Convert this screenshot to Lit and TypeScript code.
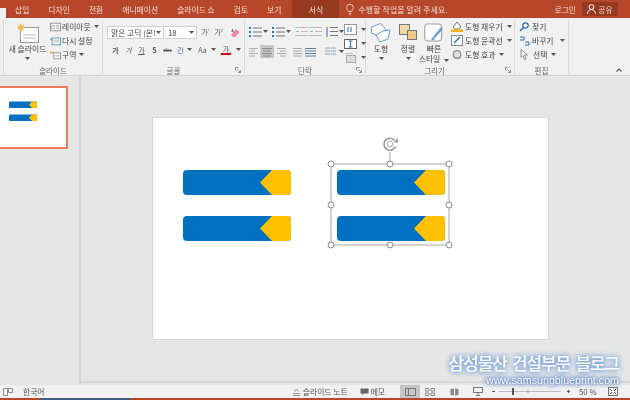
import { LitElement, html, svg, css } from "lit";
import { customElement } from "lit/decorators.js";

const caret = html`<svg class="caret" width="5" height="3" viewBox="0 0 5 3"><path d="M0 0h5L2.500 3z" fill="#555"/></svg>`;
const launcher = html`<svg class="launch" width="6" height="6" viewBox="0 0 6 6"><path d="M.5 .5h3M.5 .5v3M5.500 5.500L2.500 2.500M5.500 3v2.500H3" fill="none" stroke="#777" stroke-width=".8"/></svg>`;

const g = (w: number, h: number, body: unknown) => html`<svg class="ic" width=${w} height=${h} viewBox="0 0 ${w} ${h}" fill="none">${body}</svg>`;

function rows(w: number, spec: [number, number][], color = "#8a8a8a") {
  return g(w, 10, spec.map(([x, l], i) => svg`<rect x=${x} y=${1 + i * 2.500} width=${l} height="1" fill=${color}></rect>`));
}

const bullets = g(13, 11, svg`<g fill="#2b6cb0"><rect x="0" y="1" width="2" height="2"/><rect x="0" y="5" width="2" height="2"/><rect x="0" y="9" width="2" height="2"/></g><g fill="#777"><rect x="4" y="1.500" width="9" height="1"/><rect x="4" y="5.500" width="9" height="1"/><rect x="4" y="9.500" width="9" height="1"/></g>`);
const indent = g(13, 11, svg`<g fill="#bbb"><rect x="0" y="1" width="13" height="1"/><rect x="6" y="5" width="7" height="1"/><rect x="0" y="9" width="13" height="1"/></g><path d="M1 5.500h3" stroke="#8db4d8"/>`);
const spacing = g(13, 12, svg`<path d="M2 1v10" stroke="#2b6cb0"/><g fill="#777"><rect x="5" y="1" width="8" height="1"/><rect x="5" y="5" width="8" height="1"/><rect x="5" y="9" width="8" height="1"/></g>`);

@customElement("app-root")
export class AppRoot extends LitElement {
  static styles = css`
    :host { display: block; width: 630px; height: 400px; overflow: hidden; position: relative; background: #e6e6e6; color: #444;
      font: 7.800px "Noto Sans CJK KR", "Noto Sans", sans-serif; filter: blur(.35px); }
    * { box-sizing: border-box; }
    svg { display: block; flex: none; }
    .page { display: flex; flex-direction: column; height: 400px; }
    .tabs { height: 18px; flex: none; background: #b7472a; color: #f4dcd4; display: flex; align-items: center; position: relative; }
    .home { width: 6px; height: 10px; background: #f1f1f1; align-self: flex-end; }
    .tab-list { display: flex; gap: 19px; margin-left: 9px; }
    .active { width: 47px; height: 18px; margin-left: 11px; background: #963a20; display: flex; align-items: center; justify-content: center; color: #f6e2db; }
    .tell { display: flex; align-items: center; gap: 4px; margin-left: 7px; letter-spacing: .2px; }
    .right { margin-left: auto; display: flex; align-items: center; height: 18px; margin-right: 12px; }
    .login { margin-right: 6px; }
    .share { height: 14px; width: 36px; background: #963a20; display: flex; align-items: center; justify-content: center; gap: 2px; }
    .ribbon { height: 58px; flex: none; background: #f1f1f1; border-bottom: 1px solid #d2d2d2; display: flex; padding-left: 3px; position: relative; }
    .ribbon > .grp:first-child { border-left: 1px solid #dadada; }
    .grp { display: flex; flex-direction: column; border-right: 1px solid #dadada; height: 54px; margin-top: 2px; position: relative; flex: none; }
    .body { height: 44px; display: flex; }
    .label { flex: 1; display: flex; align-items: center; justify-content: center; color: #666; font-size: 7.500px; line-height: 1; padding-top: 3px; }
    .launch { position: absolute; right: 3px; bottom: 1px; }
    .big { display: flex; flex-direction: column; align-items: center; line-height: 10px; flex: none; }
    .big .caret { margin-top: 3px; }
    .col { display: flex; flex-direction: column; gap: 3.200px; }
    .item { display: flex; align-items: center; gap: 2px; height: 11px; white-space: nowrap; }
    .item .caret { margin-left: 2px; }
    .small-ic .ic { width: 11px; }
    .small-ic .item { gap: 1px; }
    .box { height: 13px; background: #fff; border: 1px solid #cfcfcf; display: flex; align-items: center; justify-content: space-between; padding: 0 2px 0 3px; white-space: nowrap; overflow: hidden; }
    .font-rows { display: flex; flex-direction: column; gap: 4px; padding: 6px 0 0 4px; }
    .row { display: flex; align-items: center; height: 13px; }
    .gl { width: 13px; text-align: center; font-size: 7px; color: #555; flex: none; }
    .para-rows { display: flex; flex-direction: column; gap: 7px; padding: 5px 0 0 4px; width: 99px; flex: none; }
    .para-far { display: flex; flex-direction: column; gap: 3px; padding-top: 4px; }
    .on { background: #c6c6c6; padding: 1.500px 1px; height: 13px; margin-left: -1px; }
    .main { flex: 1; display: flex; min-height: 0; padding-top: 0; }
    .side { width: 81px; flex: none; border-right: 2px solid #d6d6d6; padding-top: 10px; }
    .thumb { width: 68px; height: 63px; background: #fff; border: 2px solid #ee7b5c; border-left: 0; padding: 13px 0 0 9px; display: flex; flex-direction: column; gap: 5px; }
    .mini { width: 28px; height: 7.500px; }
    .stage { flex: 1; padding: 41px 0 0 71px; border-bottom: 2px solid #d6d6d6; margin-bottom: 2px; }
    .slide { width: 397px; height: 223px; background: #fff; border: 1px solid #d4d4d4; border-top-color: #ddd; position: relative; }
    .bar { position: absolute; width: 108px; height: 25px; }
    .sel { position: absolute; left: 170px; top: 15px; }
    .status { height: 13px; flex: none; background: #f1f1f1; display: flex; align-items: center; position: relative; padding-left: 3px; color: #555; }
    .lang { margin-left: 10px; }
    .st-right { margin-left: auto; display: flex; align-items: center; height: 13px; }
    .note { display: flex; align-items: center; gap: 2px; }
    .memo { display: flex; align-items: center; gap: 2px; margin-left: 12px; }
    .view { width: 20px; height: 13px; display: flex; align-items: center; justify-content: center; }
    .view.cur { background: #c6c6c6; margin-left: 15px; }
    .view.g { margin-left: 4px; }
    .zoomtxt { margin-left: 9px; width: 29px; }
    .strip { height: 2px; flex: none; background: #b7472a; padding-left: 40px; }
    .strip i { display: block; width: 90px; height: 2px; background: #3f5d85; }
    .wm { position: absolute; right: 11px; top: 354px; text-align: right; color: #fff; line-height: 1;
      text-shadow: 0 0 4px #5f8fd4, 0 0 7px #5f8fd4; }
    .wm1 { font-size: 17px; font-weight: 500; letter-spacing: -1.100px; word-spacing: 2.500px; }
    .wm2 { font: 500 10.700px/10px "Liberation Sans", sans-serif; margin-top: 4px; text-shadow: 0 0 2px #3d6fb8, 0 0 4px #3d6fb8, 0 0 6px #5f8fd4; }
  `;

  bar(style: string, cls = "bar") {
    return html`<svg class=${cls} style=${style} viewBox="0 0 108 25">
      <rect width="108" height="25" rx="4" fill="#0070c0"/>
      <path d="M89 0h15a4 4 0 0 1 4 4v17a4 4 0 0 1-4 4H89L77 12.500z" fill="#ffc000"/>
    </svg>`;
  }

  render() {
    return html`<div class="page">
      <div class="tabs">
        <div class="home"></div>
        <div class="tab-list">
          <span>삽입</span><span>디자인</span><span>전환</span><span>애니메이션</span><span>슬라이드 쇼</span><span>검토</span><span>보기</span>
        </div>
        <div class="active">서식</div>
        <div class="tell">
          <svg width="8" height="11" viewBox="0 0 8 11" fill="none" stroke="#f4dcd4" stroke-width=".9"><path d="M2.500 7.500C2 6 .6 5.500 .6 3.700a3.400 3.400 0 0 1 6.800 0C7.400 5.500 6 6 5.500 7.500zM2.800 9.200h2.400M3.200 10.500h1.600"/></svg>
          <span>수행할 작업을 알려 주세요.</span>
        </div>
        <div class="right">
          <span class="login">로그인</span>
          <div class="share">
            <svg width="9" height="10" viewBox="0 0 9 10" fill="none" stroke="#fff"><circle cx="4.500" cy="3" r="2.400"/><path d="M.5 9.500c.5-2.500 2-4 4-4s3.500 1.500 4 4"/></svg>
            <span>공유</span>
          </div>
        </div>
      </div>

      <div class="ribbon">
        <div class="grp" style="width:100px">
          <div class="body" style="padding:2px 0 0 3px">
            <div class="big" style="width:41px">
              ${g(22, 22, svg`<rect x="3.500" y="5.500" width="18" height="15" fill="#fff" stroke="#999"/><path d="M6 13h13M6 16h13" stroke="#bbb"/><path d="M4 1l1 2.500L7.500 2 6 4.500 8.500 5.500 6 6.500 7.500 9 5 7.500 4 10 3 7.500.5 9 2 6.500 0 5.500 2 4.500.5 2 3 3.500z" fill="#f0b849"/>`)}
              <span>새 슬라이드</span>${caret}
            </div>
            <div class="col small-ic" style="margin:-1px 0 0 2px">
              <div class="item">${g(13, 10, svg`<rect x=".5" y=".5" width="12" height="9" fill="#fff" stroke="#888"/><path d="M2 3h3v4H2zM7 3h4M7 5h4M7 7h4" stroke="#aaa"/>`)}<span>레이아웃</span>${caret}</div>
              <div class="item">${g(13, 10, svg`<rect x="2.500" y="1.500" width="10" height="8" fill="#fff" stroke="#4a8ec2"/><path d="M4 4h7M4 6h7" stroke="#aaa"/><path d="M0 3l2-2v4z" fill="#4a8ec2"/>`)}<span>다시 설정</span></div>
              <div class="item">${g(13, 10, svg`<rect x="4.500" y="2.500" width="8" height="7" fill="#fff" stroke="#888"/><path d="M5 6h7" stroke="#aaa"/><path d="M0 2h4" stroke="#e8a33a" stroke-width="2"/>`)}<span>구역</span>${caret}</div>
            </div>
          </div>
          <div class="label">슬라이드</div>
        </div>

        <div class="grp" style="width:142px">
          <div class="body font-rows">
            <div class="row">
              <div class="box" style="width:57px">맑은 고딕 (본!${caret}</div>
              <div class="box" style="width:32px;margin-left:1px;border-left:0">18 ${caret}</div>
              <span class="gl" style="margin-left:2px;width:13px">가<sup style="font-size:4px;color:#2b6cb0">^</sup></span>
              <span class="gl">가<sup style="font-size:4px;color:#2b6cb0">v</sup></span>
              <span style="margin-left:5px">${g(10, 10, svg`<path d="M1 7l5-6 3.500 3-4 5H3z" fill="#e88aa8"/><path d="M1 3h3M2.500 1v3" stroke="#777"/>`)}</span>
            </div>
            <div class="row" style="padding-left:2px">
              <span class="gl" style="font-weight:700">가</span>
              <span class="gl" style="font-style:italic">가</span>
              <span class="gl" style="text-decoration:underline">가</span>
              <span class="gl" style="font-weight:700">S</span>
              <span class="gl" style="font-size:5px;text-decoration:line-through">abc</span>
              <span class="gl" style="color:#2b6cb0">간</span>
              ${caret}
              <span class="gl" style="margin-left:2px;width:17px">Aa</span>${caret}
              <span class="gl" style="margin-left:5px;border-bottom:2px solid #e00000;line-height:8px;width:10px">가</span>
              <span style="margin-left:5px">${caret}</span>
            </div>
          </div>
          <div class="label">글꼴</div>${launcher}
        </div>

        <div class="grp" style="width:121px">
          <div class="body">
            <div class="para-rows">
              <div class="row" style="gap:1px">
                ${bullets}${caret}<span style="width:3px"></span>${bullets}${caret}<span style="width:3px"></span>${indent}${indent}<span style="width:1px"></span>${spacing}${caret}
              </div>
              <div class="row" style="gap:3px">
                ${rows(9, [[0, 9], [0, 6], [0, 9], [0, 6]], "#aaa")}
                <span class="on">${rows(12, [[1, 10], [2, 8], [1, 10], [2, 8]], "#888")}</span>
                ${rows(9, [[0, 9], [3, 6], [0, 9], [3, 6]], "#aaa")}
                <span style="width:1px"></span>
                ${rows(9, [[0, 9], [0, 9], [0, 9], [0, 9]], "#aaa")}
                ${rows(11, [[0, 11], [0, 11], [0, 11], [0, 11]], "#5a7d9a")}
                <span style="width:3px"></span>
                ${g(11, 9, svg`<path d="M0 1h5M6 1h5M0 4h5M6 4h5M0 7h5M6 7h5" stroke="#7fa3c4" stroke-width="1.200"/>`)}${caret}
              </div>
            </div>
            <div class="para-far">
              <div class="item">${g(13, 11, svg`<rect x=".5" y=".5" width="12" height="10" fill="#fff" stroke="#999"/><path d="M4 3v5M7 3v5" stroke="#2b6cb0"/>`)}${caret}</div>
              <div class="item">${g(13, 11, svg`<rect x=".5" y="1.500" width="12" height="9" fill="#fff" stroke="#666"/><path d="M6.500 3v6M4.500 3h4M4.500 9h4" stroke="#2b6cb0"/>`)}${caret}</div>
              <div class="item">${g(13, 11, svg`<rect x="2.500" y="3.500" width="9" height="7" fill="#ddd" stroke="#aaa"/><path d="M1 1.500h8" stroke="#bbb"/>`)}${caret}</div>
            </div>
          </div>
          <div class="label">단락</div>${launcher}
        </div>

        <div class="grp" style="width:149px">
          <div class="body" style="padding:2px 0 0 5px">
            <div class="big" style="width:20px">
              ${g(20, 22, svg`<path d="M.5 5L10 1.500 15 8 8 14 .5 11z" fill="#fff" stroke="#6a9cc4"/><path d="M12 9l7-1-2 9-8 3-4-7z" fill="#fff" stroke="#6a9cc4"/>`)}
              <span>도형</span>${caret}
            </div>
            <div class="big" style="width:20px;margin-left:7px">
              ${g(20, 22, svg`<rect x="1.500" y="2.500" width="10" height="10" fill="#f0d9a8" stroke="#777"/><rect x="9.500" y="8.500" width="9" height="9" fill="#f3c98a" stroke="#777"/>`)}
              <span>정렬</span>${caret}
            </div>
            <div class="big" style="width:28px;margin-left:2px">
              ${g(20, 22, svg`<rect x=".7" y="2" width="17" height="17" rx="3" fill="#fff" stroke="#999"/><path d="M9 15l8-10 2 2-8 9z" fill="#6a9cc4"/><path d="M7 18l2-3 2 1-1 2z" fill="#6a9cc4"/>`)}
              <span>빠른</span>
              <span class="item" style="height:10px">스타일${caret}</span>
            </div>
            <div class="col" style="margin:-1px 0 0 3px">
              <div class="item">${g(12, 11, svg`<path d="M2 6l4-5 4 5-3 2H4z" fill="#fff" stroke="#777"/><rect x="0" y="8.500" width="12" height="2.500" fill="#f0b400"/>`)}<span>도형 채우기</span>${caret}</div>
              <div class="item">${g(12, 11, svg`<rect x=".5" y=".5" width="11" height="10" fill="#fff" stroke="#888"/><path d="M3 8l6-6" stroke="#2b6cb0" stroke-width="1.500"/>`)}<span>도형 윤곽선</span>${caret}</div>
              <div class="item">${g(12, 11, svg`<circle cx="6" cy="5.500" r="4" fill="#ddd" stroke="#777"/><path d="M3 9h7" stroke="#999"/>`)}<span>도형 효과</span>${caret}</div>
            </div>
          </div>
          <div class="label" style="padding-right:11px">그리기</div>${launcher}
        </div>

        <div class="grp" style="width:54px">
          <div class="body" style="padding:1px 0 0 4px">
            <div class="col">
              <div class="item">${g(10, 10, svg`<circle cx="6.500" cy="3.500" r="2.700" stroke="#2b6cb0" stroke-width="1.200"/><path d="M4.500 5.500L1 9" stroke="#2b6cb0" stroke-width="1.500"/>`)}<span style="margin-left:1px">찾기</span></div>
              <div class="item">${g(11, 10, svg`<path d="M1 1h4v3H1M6 6h4v3H6" stroke="#2b6cb0"/>`)}<span>바꾸기</span><span style="margin-left:2px">${caret}</span></div>
              <div class="item">${g(10, 11, svg`<path d="M2 .5v8l2-2 1.500 4 1.500-.6L5.500 6H8.500z" fill="#fff" stroke="#777" stroke-width=".8"/>`)}<span style="margin-left:2px">선택</span>${caret}</div>
            </div>
          </div>
          <div class="label">편집</div>
        </div>
        <div style="margin:50px 0 0 47px">
          <svg width="6" height="4" viewBox="0 0 6 4"><path d="M.5 3.500L3 1l2.500 2.500" fill="none" stroke="#555" stroke-width="1.100"/></svg>
        </div>
      </div>

      <div class="main">
        <div class="side">
          <div class="thumb">
            <svg class="mini" viewBox="0 0 108 25"><rect width="108" height="25" rx="4" fill="#0070c0"/><path d="M89 0h15a4 4 0 0 1 4 4v17a4 4 0 0 1-4 4H89L77 12.500z" fill="#ffc000"/></svg>
            <svg class="mini" viewBox="0 0 108 25"><rect width="108" height="25" rx="4" fill="#0070c0"/><path d="M89 0h15a4 4 0 0 1 4 4v17a4 4 0 0 1-4 4H89L77 12.500z" fill="#ffc000"/></svg>
          </div>
        </div>
        <div class="stage">
          <div class="slide">
            ${this.bar("left:30px;top:52px")}
            ${this.bar("left:30px;top:98px")}
            ${this.bar("left:184px;top:52px")}
            ${this.bar("left:184px;top:98px")}
            <svg class="sel" width="136" height="122" viewBox="0 0 136 122" fill="none">
              <rect x="8" y="31" width="118" height="81" stroke="#a8a8a8" stroke-width="1"/>
              <path d="M67 31V19" stroke="#a8a8a8"/>
              ${[[8, 31], [67, 31], [126, 31], [8, 72], [126, 72], [8, 112], [67, 112], [126, 112]].map(([x, y]) => svg`<circle cx=${x} cy=${y} r="3" fill="#fff" stroke="#8a8a8a"/>`)}
              <path d="M72.500 13.500a6 6 0 1 1-.8-6" stroke="#999" stroke-width="1.600"/>
              <circle cx="67" cy="11" r="2.800" stroke="#aaa"/>
              <path d="M75 5v4.500h-4.500z" fill="#999"/>
            </svg>
          </div>
        </div>
      </div>

      <div class="status">
        ${g(10, 8, svg`<path d="M.5 .5h4v7h-4zM5.500 .5h4v4h-4z" stroke="#777" stroke-width=".8"/>`)}
        <span class="lang">한국어</span>
        <div class="st-right">
          <div class="note">${g(9, 8, svg`<path d="M1 7.500h7M1 5.500h7M2.500 3.500L4.500 1l2 2.500" stroke="#777" stroke-width=".8"/>`)}<span>슬라이드 노트</span></div>
          <div class="memo">${g(9, 8, svg`<path d="M.5 .5h8v5H4L2.500 7.500v-2h-2z" fill="#666"/>`)}<span>메모</span></div>
          <div class="view cur">${g(11, 8, svg`<rect x=".5" y=".5" width="10" height="7" stroke="#777"/><path d="M3.500 1v6" stroke="#777"/>`)}</div>
          <div class="view g" style="margin-left:0">${g(10, 8, svg`<path d="M.5 .5h3.500v2.500H.5zM6 .5h3.500v2.500H6zM.5 5h3.500v2.500H.5zM6 5h3.500v2.500H6z" stroke="#777" stroke-width=".8"/>`)}</div>
          <div class="view g">${g(9, 8, svg`<path d="M.5 1L4 .5v7L.5 7zM8.500 1L5 .5v7L8.500 7z" fill="#888"/>`)}</div>
          <div class="view g">${g(10, 9, svg`<rect x=".5" y=".5" width="9" height="5" stroke="#777"/><path d="M5 6v2.500M3 8.500h4" stroke="#777"/>`)}</div>
          <svg width="78" height="9" viewBox="0 0 78 9" style="margin-left:4px">
            <path d="M0 4.500h3M75 4.500h3M76.500 3v3" stroke="#555"/><path d="M7 4.500h62" stroke="#bbb"/><path d="M36 3v3" stroke="#999"/><rect x="20" y="1" width="2" height="7" fill="#555"/>
          </svg>
          <span class="zoomtxt">50 %</span>
          ${g(10, 9, svg`<rect x=".5" y=".5" width="9" height="8" stroke="#777"/><path d="M2 2l2 2M8 2L6 4M2 7l2-2M8 7L6 5" stroke="#555"/>`)}
          <span style="width:12px"></span>
        </div>
      </div>
      <div class="strip"><i></i></div>
    </div>
    <div class="wm"><div class="wm1">삼성물산 건설부문 블로그</div><div class="wm2">www.samsungblueprint.com</div></div>`;
  }
}
